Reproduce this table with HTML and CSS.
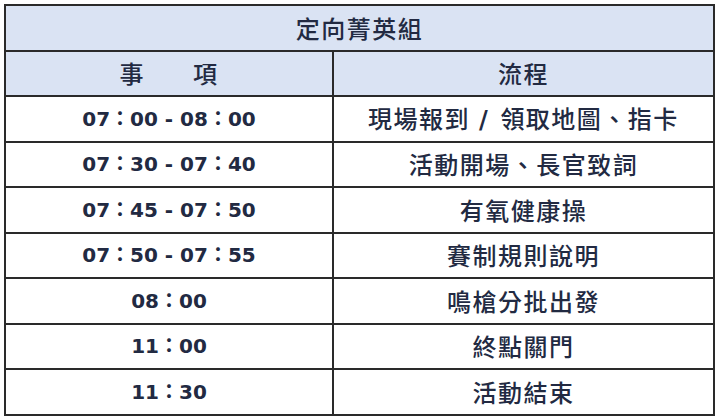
FILE: index.html
```html
<!DOCTYPE html>
<html lang="zh-Hant">
<head>
<meta charset="utf-8">
<title>定向菁英組</title>
<link rel="stylesheet" href="styles.css">
</head>
<body>
<table class="sched">
  <colgroup><col class="c1"><col class="c2"></colgroup>
  <tr class="head"><td colspan="2" class="cj">定向菁英組</td></tr>
  <tr class="head"><td class="cj">事<span class="gap"></span>項</td><td class="cj">流程</td></tr>
  <tr><td class="time">07：00 - 08：00</td><td class="cj">現場報到<span class="sep">/</span>領取地圖、指卡</td></tr>
  <tr><td class="time">07：30 - 07：40</td><td class="cj">活動開場、長官致詞</td></tr>
  <tr><td class="time">07：45 - 07：50</td><td class="cj">有氧健康操</td></tr>
  <tr><td class="time">07：50 - 07：55</td><td class="cj">賽制規則說明</td></tr>
  <tr><td class="time">08：00</td><td class="cj">鳴槍分批出發</td></tr>
  <tr><td class="time">11：00</td><td class="cj">終點關門</td></tr>
  <tr><td class="time">11：30</td><td class="cj">活動結束</td></tr>
</table>
</body>
</html>
```
FILE: styles.css
```css
html, body { margin: 0; padding: 0; background: #fff; }
body { padding: 4px 0 0 4px; }
.sched {
  border-collapse: collapse;
  width: 709px;
  table-layout: fixed;
  color: #222a42;
}
.c1 { width: 328px; }
.c2 { width: 381px; }
.sched td {
  border: 2px solid #2a2a2a;
  height: 43.5px;
  padding: 0;
  text-align: center;
  vertical-align: middle;
  line-height: 1;
}
.sched td + td { border-left: 2px solid #555; }
.head td { background: #dae3f3; }
.cj {
  font-family: "Noto Sans CJK TC", "Noto Sans", sans-serif;
  font-size: 24px;
  font-weight: 500;
  letter-spacing: 1.5px;
}
.sep {
  display: inline-block;
  margin: 0 11px 0 9px;
  font-family: "DejaVu Sans", sans-serif;
  font-weight: 700;
  font-size: 24px;
}
.gap { display: inline-block; width: 48px; }
.time {
  font-family: "DejaVu Sans", "Noto Sans CJK TC", sans-serif;
  font-weight: 700;
  font-size: 20px;
}
```
